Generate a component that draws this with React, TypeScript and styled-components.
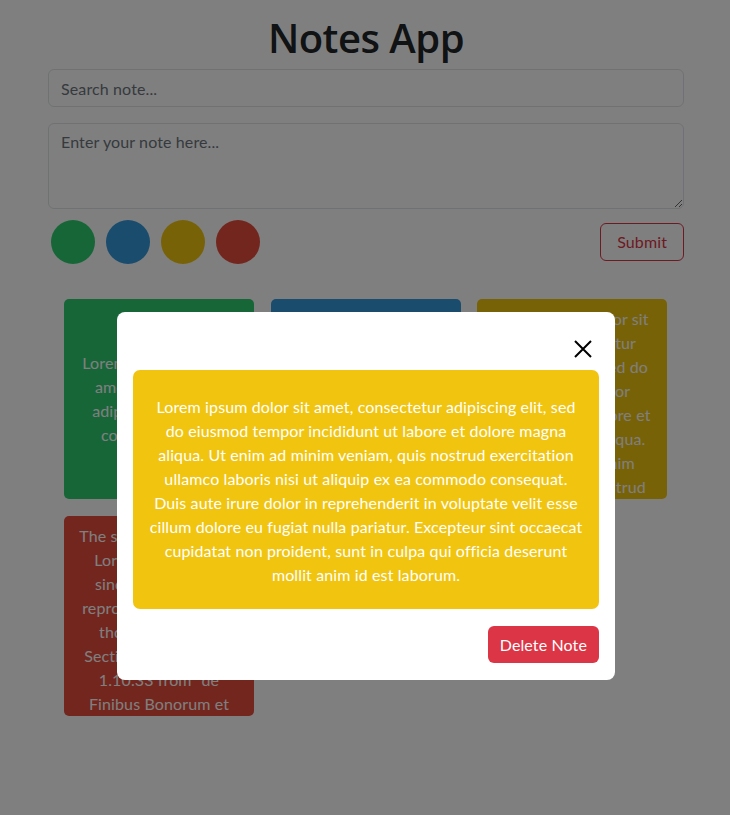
import React from "react";
import styled, { createGlobalStyle } from "styled-components";

const GlobalStyle = createGlobalStyle`
  * { box-sizing: border-box; }
  html, body { margin: 0; padding: 0; background: #ffffff; }
  body {
    font-family: "Lato", "Noto Sans", sans-serif;
    font-size: 16px;
    line-height: 1.5;
    letter-spacing: 0.12px;
    color: #212529;
  }
`;

const Page = styled.div`
  width: 636px;
  margin: 0 0 0 48px;
  padding-top: 13px;
`;

const Title = styled.h1`
  margin: 0 0 6px;
  text-align: center;
  font-family: "Open Sans", "Noto Sans", sans-serif;
  font-size: 40px;
  font-weight: 600;
  line-height: 50px;
  color: #212529;
  letter-spacing: -0.5px;
`;

const Search = styled.input`
  display: block;
  width: 100%;
  height: 38px;
  padding: 6px 12px;
  font: inherit;
  letter-spacing: inherit;
  color: #212529;
  border: 1px solid #dee2e6;
  border-radius: 6px;
  background: #fff;
  &::placeholder { color: #6c757d; }
`;

const NoteInput = styled.textarea`
  display: block;
  width: 100%;
  height: 86px;
  margin-top: 16px;
  padding: 6px 12px;
  font: inherit;
  letter-spacing: inherit;
  color: #212529;
  border: 1px solid #dee2e6;
  border-radius: 6px;
  background: #fff;
  resize: vertical;
  &::placeholder { color: #6c757d; }
`;

const Controls = styled.div`
  display: flex;
  justify-content: space-between;
  align-items: center;
  margin-top: 11px;
`;

const Swatches = styled.div`
  display: flex;
  gap: 11px;
  padding-left: 3px;
`;

const Swatch = styled.button<{ $color: string }>`
  width: 44px;
  height: 44px;
  border-radius: 50%;
  border: none;
  padding: 0;
  background: ${(p) => p.$color};
  cursor: pointer;
`;

const SubmitButton = styled.button`
  height: 38px;
  padding: 0 16px;
  font: inherit;
  letter-spacing: inherit;
  color: #dc3545;
  background: transparent;
  border: 1px solid #dc3545;
  border-radius: 6px;
`;

const Grid = styled.div`
  display: grid;
  grid-template-columns: repeat(3, 190px);
  gap: 17px 16.5px;
  justify-content: start;
  padding-left: 16px;
  margin-top: 35px;
`;

const Card = styled.div<{ $color: string }>`
  height: 200px;
  padding: 8px 14px;
  border-radius: 5px;
  background: ${(p) => p.$color};
  color: #fff;
  text-align: center;
  display: flex;
  flex-direction: column;
  overflow-y: auto;
  &::-webkit-scrollbar { width: 4px; }
  &::-webkit-scrollbar-track { background: transparent; }
  &::-webkit-scrollbar-thumb { background: rgba(255, 255, 255, 0.35); border-radius: 2px; }
`;

const CardText = styled.p`
  margin: auto 0;
  line-height: 24px;
`;

const Backdrop = styled.div`
  position: fixed;
  inset: 0;
  background: rgba(0, 0, 0, 0.5);
`;

const Modal = styled.div`
  position: fixed;
  top: 312px;
  left: 117px;
  width: 498px;
  background: #fff;
  border-radius: 8px;
  padding: 0 16px 17px;
  display: flex;
  flex-direction: column;
`;

const ModalHeader = styled.div`
  display: flex;
  justify-content: flex-end;
  align-items: center;
  height: 58px;
  padding-right: 6px;
  padding-top: 16px;
`;

const CloseButton = styled.button`
  width: 20px;
  height: 20px;
  padding: 0;
  border: none;
  background: transparent;
  display: flex;
  align-items: center;
  justify-content: center;
  cursor: pointer;
`;

const NoteBody = styled.div`
  background: #f1c40f;
  border-radius: 7px;
  padding: 25px 16px 22px;
  color: #fff;
  text-align: center;
  line-height: 24px;
`;

const ModalFooter = styled.div`
  display: flex;
  justify-content: flex-end;
  margin-top: 17px;
`;

const DeleteButton = styled.button`
  height: 37px;
  padding: 0 12px;
  font: inherit;
  letter-spacing: inherit;
  color: #fff;
  background: #dc3545;
  border: none;
  border-radius: 6px;
`;

const LOREM =
  "Lorem ipsum dolor sit amet, consectetur adipiscing elit, sed do eiusmod tempor incididunt ut labore et dolore magna aliqua. Ut enim ad minim veniam, quis nostrud exercitation ullamco laboris nisi ut aliquip ex ea commodo consequat. Duis aute irure dolor in reprehenderit in voluptate velit esse cillum dolore eu fugiat nulla pariatur. Excepteur sint occaecat cupidatat non proident, sunt in culpa qui officia deserunt mollit anim id est laborum.";

const notes = [
  { color: "#2ecc71", text: "Lorem ipsum dolor sit amet, consectetur adipisicing elit, sed commodo ligula." },
  { color: "#3498db", text: "Contrary to popular belief, Lorem Ipsum is not simply random text." },
  { color: "#f1c40f", text: LOREM },
  {
    color: "#e74c3c",
    text: 'The standard chunk of Lorem Ipsum used since the 1500s is reproduced below for those interested. Sections 1.10.32 and 1.10.33 from "de Finibus Bonorum et Malorum" by Cicero are also reproduced in their exact original form, accompanied by English versions from the 1914 translation by H. Rackham.',
  },
];

const swatches = ["#2ecc71", "#3498db", "#f1c40f", "#e74c3c"];

export default function App() {
  return (
    <>
      <GlobalStyle />
      <Page>
        <Title>Notes App</Title>
        <Search placeholder="Search note..." />
        <NoteInput placeholder="Enter your note here..." />
        <Controls>
          <Swatches>
            {swatches.map((c) => (
              <Swatch key={c} $color={c} aria-label={c} />
            ))}
          </Swatches>
          <SubmitButton>Submit</SubmitButton>
        </Controls>
        <Grid>
          {notes.map((n, i) => (
            <Card key={i} $color={n.color}>
              <CardText>{n.text}</CardText>
            </Card>
          ))}
        </Grid>
      </Page>
      <Backdrop />
      <Modal>
        <ModalHeader>
          <CloseButton aria-label="Close">
            <svg width="18" height="18" viewBox="0 0 18 18">
              <path d="M1 1 L17 17 M17 1 L1 17" stroke="#000" strokeWidth="2" />
            </svg>
          </CloseButton>
        </ModalHeader>
        <NoteBody>{LOREM}</NoteBody>
        <ModalFooter>
          <DeleteButton>Delete Note</DeleteButton>
        </ModalFooter>
      </Modal>
    </>
  );
}
